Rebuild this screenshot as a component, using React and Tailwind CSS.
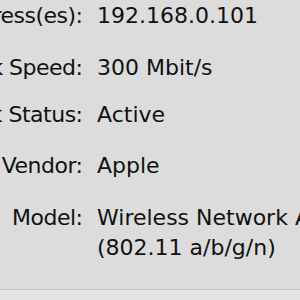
export default function App() {
  const rows = [
    { label: 'IP Address(es):', value: ['192.168.0.101'], mt: 'mt-[2px]', lh: 'leading-[28px]' },
    { label: 'Link Speed:', value: ['300 Mbit/s'], mt: 'mt-[24px]', lh: 'leading-[28px]' },
    { label: 'Link Status:', value: ['Active'], mt: 'mt-[19px]', lh: 'leading-[28px]' },
    { label: 'Vendor:', value: ['Apple'], mt: 'mt-[23px]', lh: 'leading-[28px]' },
    { label: 'Model:', value: ['Wireless Network Adapter', '(802.11 a/b/g/n)'], mt: 'mt-[23px]', lh: 'leading-[30px]' },
  ];

  return (
    <div className="w-[300px] h-[300px] overflow-hidden bg-[#dcdcdc] flex flex-col font-['DejaVu_Sans',sans-serif] text-[22px] text-[#111]">
      <div className="h-[289px] flex flex-col">
        {rows.map((r) => (
          <div key={r.label} className={`flex ${r.mt} ${r.lh}`}>
            <div className="w-[82px] shrink-0 flex justify-end whitespace-nowrap">
              <span className="tracking-[-0.5px] mr-[-0.5px]">{r.label}</span>
            </div>
            <div className="ml-[15px] flex flex-col whitespace-nowrap">
              {r.value.map((v) => (
                <span key={v}>{v}</span>
              ))}
            </div>
          </div>
        ))}
      </div>
      <div className="flex-1 border-t border-[#c4c4c4] bg-[#e3e3e3]" />
    </div>
  );
}
